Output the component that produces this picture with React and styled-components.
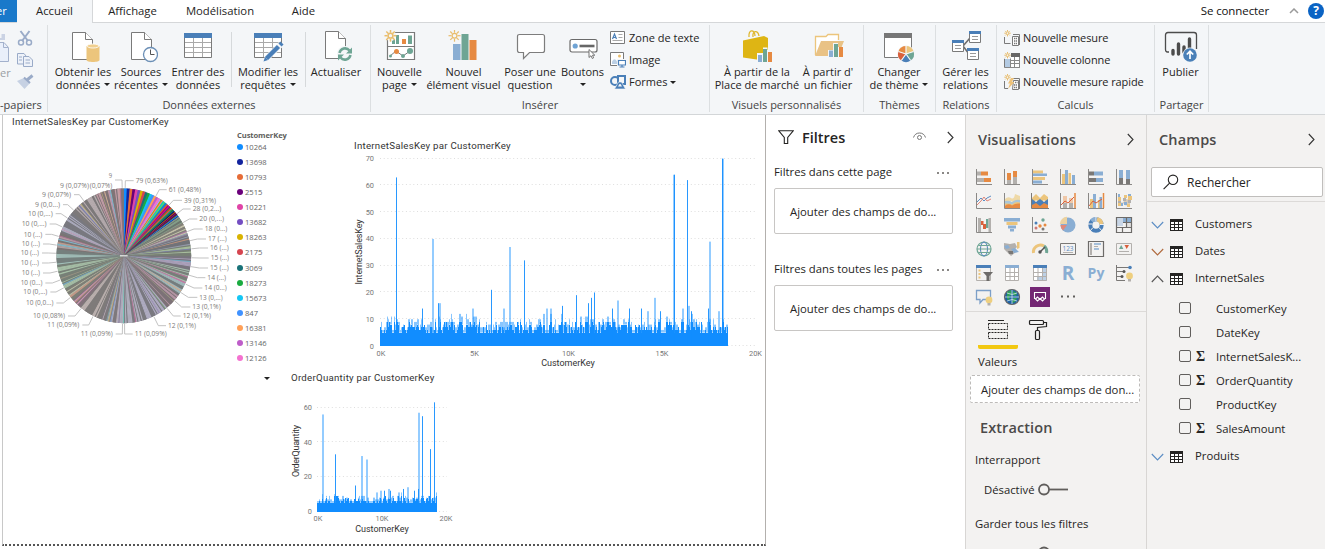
import React from 'react';
import styled, { createGlobalStyle, css } from 'styled-components';

const GlobalStyle = createGlobalStyle`
  *, *::before, *::after { box-sizing: border-box; }
  body { margin: 0; background: #fff; overflow: hidden; }
  #root { font-family: "Open Sans", "Noto Sans", sans-serif; font-size: 11px; color: #252423; }
`;

const Shell = styled.div`
  width: 1325px;
  height: 549px;
  display: flex;
  flex-direction: column;
  overflow: hidden;
  background: #fff;
`;

/* ---------- Tabs ---------- */
const TabStrip = styled.nav`
  height: 23px;
  flex: none;
  display: flex;
  border-bottom: 1px solid #d5d7d9;
  background: #fff;
`;
const FileTab = styled.div`
  width: 17px;
  height: 22px;
  background: #1979ca;
  color: #fff;
  line-height: 22px;
  white-space: nowrap;
  overflow: hidden;
`;
const FileTabText = styled.span`
  display: block;
  margin-left: -4px;
`;
const Tab = styled.div`
  width: ${p => p.$w}px;
  height: 23px;
  line-height: 22px;
  text-align: center;
  font-size: 11.3px;
  ${p => p.$active && css`background: #f4f6f8; border-right: 1px solid #d5d7d9;`}
`;
const Account = styled.div`
  margin-left: auto;
  display: flex;
  align-items: center;
  height: 21px;
  font-size: 11.5px;
  color: #111;
  letter-spacing: -0.1px;
`;
const CaretUp = styled.svg`margin: 0 9px 0 20px;`;
const Help = styled.div`
  width: 16px;
  height: 16px;
  border-radius: 50%;
  background: #0a63c4;
  color: #fff;
  font-weight: 700;
  font-size: 12px;
  line-height: 16px;
  text-align: center;
  margin: 0 1px 0 0;
`;

/* ---------- Ribbon ---------- */
const Ribbon = styled.div`
  height: 92px;
  flex: none;
  display: flex;
  background: #f4f6f8;
  border-bottom: 1px solid #d3d6d8;
  padding-top: 2px;
`;
const GroupBox = styled.section`
  width: ${p => p.$w}px;
  height: 87px;
  flex: none;
  display: flex;
  flex-direction: column;
  border-right: 1px solid #dcdfe1;
`;
const GroupBody = styled.div`
  height: 71px;
  flex: none;
  display: flex;
  padding-left: ${p => p.$pad || 0}px;
`;
const GroupLabel = styled.div`
  flex: none;
  text-align: center;
  line-height: 18px;
  color: #444;
  white-space: nowrap;
`;
const BigButton = styled.div`
  width: ${p => p.$w}px;
  flex: none;
  display: flex;
  flex-direction: column;
  align-items: center;
  padding-top: 5px;
`;
const ButtonText = styled.div`
  margin-top: 1px;
  line-height: 13px;
  white-space: nowrap;
  display: flex;
  flex-direction: column;
  align-items: center;
`;
const Line = styled.span`
  display: flex;
  align-items: center;
  min-height: 13px;
`;
const Caret = styled.i`
  border: 3px solid transparent;
  border-top-color: #222;
  border-bottom-width: 0;
  margin-left: ${p => (p.$alone ? 0 : 4)}px;
`;
const Divider = styled.div`
  width: 1px;
  height: 55px;
  margin: 7px ${p => p.$r}px 0 ${p => p.$l}px;
  background: #d6d9db;
`;
const SmallList = styled.div`
  display: flex;
  flex-direction: column;
  padding: 2px 0 0 ${p => p.$pad || 0}px;
  letter-spacing: ${p => p.$ls || 0}px;
`;
const SmallItem = styled.div`
  height: 22px;
  display: flex;
  align-items: center;
  gap: 3px;
  white-space: nowrap;
  line-height: 14px;
`;
const SmallText = styled.span`margin-top: -1px;`;
const ClipBody = styled.div`
  height: 71px;
  flex: none;
  display: flex;
  color: #9a9ea4;
`;
const PasteColumn = styled.div`
  width: 15px;
  display: flex;
  flex-direction: column;
  padding-top: 8px;
`;
const ToolColumn = styled.div`
  display: flex;
  flex-direction: column;
  padding-top: 3px;
`;
const ClipLabel = styled(GroupLabel)`
  text-align: right;
  padding-right: 6px;
`;

const G = '#7a7a7a', B = '#4a7fb8', LB = '#8aaed3', GR = '#6ea594', O = '#e68a42', Y = '#ecc57c';

const Sun = ({ x, y, r = 6, w = 1.5 }) => (
  <g stroke="#e9bd6c" strokeWidth={w} fill="none">
    {[0, 45, 90, 135, 180, 225, 270, 315].map(a => {
      const c = Math.cos(a * Math.PI / 180), s = Math.sin(a * Math.PI / 180);
      return <path key={a} d={`M${x + c * r * 0.5} ${y + s * r * 0.5}L${x + c * r} ${y + s * r}`} />;
    })}
    <circle cx={x} cy={y} r={r * 0.4} />
  </g>
);
const Doc = ({ x = 6, y = 2 }) => (
  <g transform={`translate(${x} ${y})`} fill="#fff" stroke={G}>
    <path d="M.5 .5H13.5L20.5 7.5V27.5H.5Z" />
    <path d="M13.5 .5V7.5H20.5" />
  </g>
);
const Grid = () => (
  <g>
    <path d="M3.5 3.5H30.5V27.5H3.5Z" fill="#fff" stroke={G} />
    <path d="M4 12.5H30M4 17.5H30M4 22.5H30M12.5 8V27M21.5 8V27" stroke="#a9a9a9" fill="none" />
    <rect x="3" y="3" width="28" height="5" fill={B} />
  </g>
);
const Icon34 = ({ children }) => <svg width="34" height="34" viewBox="0 0 34 34" fill="none">{children}</svg>;

const icons = {
  data: <Icon34><Doc /><path d="M20.5 16V30C20.5 32.6 33.5 32.6 33.5 30V16Z" fill="#ecc57c" /><ellipse cx="27" cy="16" rx="6" ry="2" fill="#f0cf8f" stroke="#fff" strokeWidth=".8" /></Icon34>,
  recent: <Icon34><Doc x={7} /><circle cx="26.5" cy="24.5" r="7" fill="#fff" stroke="#6b8fb6" strokeWidth="1.3" /><path d="M26.5 19.5V24.5H30.5" stroke="#555" /></Icon34>,
  table: <Icon34><Grid /></Icon34>,
  edit: <Icon34><Grid /><path d="M12 32L14 26 28 12 32.5 16 18 30Z" fill="#f4f6f8" /><path d="M12.5 31.5L14 27 17 30Z" fill={B} /><path d="M15.5 28.5L27.5 16.5M29 15L31 13" stroke={B} strokeWidth="4.4" /></Icon34>,
  refresh: <Icon34><Doc y={1} /><circle cx="26" cy="24" r="8" fill="#f4f6f8" /><path d="M20.5 23A5.7 5.7 0 0 1 30.5 20.5M31.5 25A5.7 5.7 0 0 1 21.5 27.5" stroke={GR} strokeWidth="2.5" /><path d="M33 17.5V23.5H27ZM19 30.5V24.5H25Z" fill={GR} /></Icon34>,
  page: <Icon34><path d="M4.5 2.5H31.5V29.5H4.5ZM4.5 16.5H31.5" fill="#fff" stroke={G} strokeWidth="1.2" /><path d="M9 14V9H12V14M13 14V5H16V14M25 14V5.5H29V14" fill={GR} /><path d="M19 9H23V14H19Z" fill={O} /><path d="M7 26L13 21 20 26 27 21" stroke={G} /><circle cx="7.5" cy="26" r="1.5" fill={GR} /><circle cx="13.5" cy="21.5" r="2.5" fill={O} /><circle cx="20" cy="26" r="2" fill={GR} /><circle cx="27" cy="21" r="3" fill={GR} /><circle cx="7.5" cy="5.5" r="5.5" fill="#f4f6f8" /><Sun x={7.5} y={5.7} /></Icon34>,
  visual: <Icon34><path d="M6 14H13.5V30H6Z" fill={LB} /><path d="M14.5 4H21.5V30H14.5Z" fill={GR} /><path d="M22.5 10H29.5V30H22.5Z" fill={O} /><Sun x={7.5} y={5.7} w={1.2} /></Icon34>,
  ask: <Icon34><path d="M6.5 4.5H29.5Q31.5 4.5 31.5 6.5V20.5Q31.5 22.5 29.5 22.5H16.5L10.5 28.5V22.5H6.5Q4.5 22.5 4.5 20.5V6.5Q4.5 4.5 6.5 4.5Z" fill="#fff" stroke="#7d7d7d" strokeWidth="1.2" /></Icon34>,
  buttons: <Icon34><rect x="4" y="9.5" width="27" height="12.5" rx="2" fill="#fff" stroke="#6a6a6a" strokeWidth="1.2" /><circle cx="9.2" cy="16" r="2.6" fill="#6fa3d4" /><path d="M13.5 16H28.5" stroke="#666" strokeWidth="2.6" /><path d="M23 19.5V27.5L25 25.7 26.3 28.5 27.6 27.8 26.5 25.2H28.8Z" fill="#fff" stroke="#666" strokeWidth=".9" /></Icon34>,
  market: <Icon34><path d="M9 7C8-1 15-1 15 6M13 7C12 0 18 0 19 6" stroke="#dfb62c" strokeWidth="1.3" /><path d="M3 10.5L24 6 28 8V25L20 30 3 27.5Z" fill="#deb514" /><path d="M17 23H23V17.5H27.5V20H33V32.5H17Z" fill="#f4f6f8" /><path d="M18 25H22V32H18Z" fill={LB} /><path d="M23 19H27V32H23Z" fill={GR} /><path d="M28 22H32V32H28Z" fill={O} /></Icon34>,
  file: <Icon34><path d="M4.5 25V6.5H15L17 4.5H27.5V10" fill="#fff" stroke="#ecc57c" strokeWidth="1.3" /><path d="M4 26L10 11H33L27 26Z" fill="#e9c285" /><path d="M17 20H22V13H27V17H33V28H17Z" fill="#f4f6f8" /><path d="M18 20.5H22V27H18Z" fill={LB} /><path d="M23 14H27V27H23Z" fill={GR} /><path d="M28 17H32V27H28Z" fill={O} /></Icon34>,
  theme: <Icon34><path d="M2.5 3.5H29.5V27.5H2.5Z" fill="#fff" stroke={G} /><rect x="2" y="3" width="28" height="5" fill="#777" /><circle cx="24" cy="24" r="8.7" fill="#f4f6f8" /><path d="M24 24V16A8 8 0 0 1 31.6 21.5Z" fill="#ecc57c" /><path d="M24 24L31.6 21.5A8 8 0 0 1 28.7 30.5Z" fill={GR} /><path d="M24 24L28.7 30.5A8 8 0 0 1 19.3 30.5Z" fill={B} /><path d="M24 24L19.3 30.5A8 8 0 0 1 16.4 21.5Z" fill="#d9603c" /><path d="M24 24L16.4 21.5A8 8 0 0 1 24 16Z" fill={O} /><path d="M24 24V16M24 24L31.6 21.5M24 24L28.7 30.5M24 24L19.3 30.5M24 24L16.4 21.5" stroke="#f4f6f8" strokeWidth="1.2" /></Icon34>,
  relations: <Icon34><path d="M14 16L21 8M14 16L20 24" stroke="#6d6d6d" strokeWidth="1.6" />{[[3, 10], [20, 1], [18, 18]].map(([x, y]) => <g key={x} transform={`translate(${x} ${y})`}><path d="M.5 .5H11.5V11.5H.5Z" fill="#fff" stroke={G} /><path d="M0 0H12V3H0Z" fill={B} /><path d="M3 5.5H9M3 8.5H9" stroke="#999" /></g>)}</Icon34>,
  publish: <Icon34><path d="M5 22H3.5Q1.5 22 1.5 19.5V5Q1.5 2.5 4 2.5H30Q32.5 2.5 32.5 5V19" stroke="#4c4c4c" strokeWidth="1.3" /><path d="M9 20.5V24M14.5 14V24M20 17V22M25.5 9V20" stroke="#4c4c4c" strokeWidth="3.4" strokeLinecap="round" /><circle cx="26" cy="25" r="7.5" fill="#f4f6f8" /><circle cx="26" cy="25" r="6.8" fill="#4a80b8" /><path d="M26 29V22M22.8 24.5L26 21.3 29.2 24.5" stroke="#fff" strokeWidth="1.7" /></Icon34>,
};

const Icon16 = ({ children }) => <svg width="16" height="16" viewBox="0 0 16 16" fill="none">{children}</svg>;
const smallIcons = {
  text: <Icon16><path d="M.5 1.5H14.5V13.5H.5Z" fill="#fff" stroke={G} /><path d="M2.5 9L4.5 4 6.5 9M3.2 7.5H5.8" stroke={B} strokeWidth="1.2" /><path d="M8.5 4.5H12.5M8.5 7.5H12.5M2.5 10.5H12.5" stroke="#aaa" /></Icon16>,
  image: <Icon16><path d="M.5 .5H13.5V13.5H.5Z" fill="#fff" stroke={G} /><circle cx="9.5" cy="4" r="1.5" fill="#e9bd6c" /><path d="M2 12V9.5Q4.5 5 7 9.5V12Z" fill="#bcd0e5" /><path d="M7 7H16V16H7Z" fill="#f4f6f8" /><path d="M8.5 8.5H15.5V13H8.5ZM9.5 15H14.5M12 13V15" fill="#fff" stroke={B} strokeWidth="1.2" /></Icon16>,
  shapes: <Icon16><circle cx="5" cy="7" r="4" stroke={B} strokeWidth="2" /><path d="M8 2H15V10H8Z" fill="#f4f6f8" stroke={B} strokeWidth="2" /><path d="M4.5 15L8.5 8H11.5L15.5 15Z" fill={B} stroke="#f4f6f8" strokeWidth=".6" /><path d="M8 12.5L9.5 10H10.5L12 12.5Z" fill="#f4f6f8" /></Icon16>,
  measure: <Icon16><path d="M.5 7V13.5H6.5M9 4.5H15.5V15" stroke={G} /><path d="M8.5 6.5H14.5V15.5H8.5Z" fill="#fff" stroke={G} /><path d="M10 8.5H13.5M10 11H13.5M10 13.5H13.5" stroke="#777" strokeWidth="1.4" strokeDasharray="1.2 .6" /><Sun x={3.5} y={3.2} r={3.2} w={1} /></Icon16>,
  column: <Icon16><path d="M.5 6.5V15.5H15.5V1" stroke={G} fill="#fff" /><path d="M1 7H6V15H1Z" fill="#b4cbe3" /><path d="M7 1H16V5H7Z" fill="#666" /><path d="M6 5H15V15H6Z" fill="#fff" /><path d="M6.5 5V15M10.5 5V15M6 8.5H15M6 11.5H15M1 15.5H15.5V5" stroke="#888" /><path d="M0 0H7V6.500H0Z" fill="#f4f6f8" /><Sun x={3.5} y={3.2} r={3.2} w={1} /></Icon16>,
  quick: <Icon16><path d="M.5 7V14.5H4M9 4.5H15.5V15" stroke={G} /><path d="M9.5 6.5H14.5V15.5H8.5Z" fill="#fff" stroke={G} /><path d="M11 8.5H13.5M10 11H13.5M10 13.5H13.5" stroke="#777" strokeWidth="1.4" strokeDasharray="1.2 .6" /><path d="M7 4H10L8 8H10.5L4 15 6 9.5H4Z" fill="#edc27a" /><Sun x={3.5} y={3.2} r={3.2} w={1} /></Icon16>,
};

function Big({ w, icon, lines, caret }) {
  return (
    <BigButton $w={w}>
      {icons[icon]}
      <ButtonText>
        {lines.map((l, i) => <Line key={i}>{l}{caret && i === 1 && <Caret $alone={!l} />}</Line>)}
      </ButtonText>
    </BigButton>
  );
}
function Small({ icon, text, caret }) {
  return <SmallItem>{smallIcons[icon]}<SmallText>{text}</SmallText>{caret && <Caret $alone />}</SmallItem>;
}
function Group({ w, pad, label, children }) {
  return <GroupBox $w={w}><GroupBody $pad={pad}>{children}</GroupBody><GroupLabel>{label}</GroupLabel></GroupBox>;
}

function RibbonBar() {
  return (
    <Ribbon>
      <GroupBox $w={48}>
        <ClipBody>
          <PasteColumn>
            <svg width="10" height="32" viewBox="0 0 10 32"><path d="M0 5H1.5V1H5V7H0Z" fill="#cbd3e4" /><path d="M0 9.5H4L8.5 14.5V28.5H0" fill="#e9effa" stroke="#a3b1cc" /><path d="M3.5 10V14.5H8" fill="none" stroke="#a3b1cc" /></svg>
            <Line>er</Line>
          </PasteColumn>
          <ToolColumn>
            <svg width="20" height="66" viewBox="0 0 20 66" fill="none" stroke="#9aabc8" strokeWidth="1.5">
              <path d="M5.5 3L13 13M14.5 3L7 13" strokeWidth="2" /><circle cx="6" cy="14.5" r="2.5" /><circle cx="14" cy="14.5" r="2.5" />
              <path d="M2.5 25.5H9L11 28V36H2.5Z" fill="#eef2f9" strokeWidth="1" /><path d="M8.5 28.5H14L17.5 32V38.5H8.5Z" fill="#eef2f9" strokeWidth="1" /><path d="M4 29H7M4 32H7M10.5 32H15M10.5 35H15" strokeWidth="1" />
              <path d="M12 52L17.5 47.5" strokeWidth="3" /><path d="M2 53L10 49.5 15 55 9.5 61Z" fill="#c6d1e3" stroke="none" /><path d="M9 49.5L15 55" strokeWidth="2" />
            </svg>
          </ToolColumn>
        </ClipBody>
        <ClipLabel>-papiers</ClipLabel>
      </GroupBox>
      <Group w={323} pad={6} label="Données externes">
        <Big w={58} icon="data" lines={['Obtenir les', 'données']} caret />
        <Big w={58} icon="recent" lines={['Sources', 'récentes']} caret />
        <Big w={56} icon="table" lines={['Entrer des', 'données']} />
        <Divider $l={5} $r={3} />
        <Big w={66} icon="edit" lines={['Modifier les', 'requêtes']} caret />
        <Divider $l={4} $r={0} />
        <Big w={60} icon="refresh" lines={['Actualiser']} />
      </Group>
      <Group w={339} pad={4} label="Insérer">
        <Big w={49} icon="page" lines={['Nouvelle', 'page']} caret />
        <Big w={79} icon="visual" lines={['Nouvel', 'élément visuel']} />
        <Big w={54} icon="ask" lines={['Poser une', 'question']} />
        <Big w={51} icon="buttons" lines={['Boutons', '']} caret />
        <SmallList $pad={2}>
          <Small icon="text" text="Zone de texte" />
          <Small icon="image" text="Image" />
          <Small icon="shapes" text="Formes" caret />
        </SmallList>
      </Group>
      <Group w={154} pad={5} label="Visuels personnalisés">
        <Big w={84} icon="market" lines={['À partir de la', 'Place de marché']} />
        <Big w={58} icon="file" lines={["À partir d'", 'un fichier']} />
      </Group>
      <Group w={72} label="Thèmes"><Big w={70} icon="theme" lines={['Changer', 'de thème']} caret /></Group>
      <Group w={61} label="Relations"><Big w={59} icon="relations" lines={['Gérer les', 'relations']} /></Group>
      <Group w={158} pad={7} label="Calculs">
        <SmallList $ls={-0.1}>
          <Small icon="measure" text="Nouvelle mesure" />
          <Small icon="column" text="Nouvelle colonne" />
          <Small icon="quick" text="Nouvelle mesure rapide" />
        </SmallList>
      </Group>
      <Group w={54} label="Partager"><Big w={51} icon="publish" lines={['Publier']} /></Group>
    </Ribbon>
  );
}

/* ---------- Report canvas ---------- */
const Workspace = styled.div`
  flex: 1;
  display: flex;
  min-height: 0;
`;
const Canvas = styled.main`
  position: relative;
  width: 764px;
  height: 431px;
  margin-left: 2px;
  flex: none;
  background: #fff;
  border-left: 1px solid #c8c8c8;
  border-right: 1px solid #b3b0ad;
  border-bottom: 2px dotted #555;
`;
const Visual = styled.article`
  position: absolute;
  left: ${p => p.$x}px;
  top: ${p => p.$y}px;
  display: flex;
  flex-direction: column;
  font-family: Roboto, "Open Sans", sans-serif;
`;
const VisualTitle = styled.h2`
  margin: 0 0 0 ${p => p.$indent || 0}px;
  font-size: 9.7px;
  font-weight: 400;
  line-height: 14px;
  letter-spacing: 0.25px;
  color: #333;
  white-space: nowrap;
`;
const TitleRow = styled.div`
  display: flex;
  align-items: center;
`;
const PieRow = styled.div`
  display: flex;
`;
const PieHolder = styled.div`
  width: 225px;
  padding-top: 34.7px;
`;
const Legend = styled.ul`
  list-style: none;
  margin: 0;
  padding: 1.5px 0 0;
  font-family: "Open Sans", sans-serif;
  font-size: 7.6px;
  color: #666;
`;
const LegendTitle = styled.li`
  font-weight: 700;
  line-height: 9px;
  color: #605e5c;
  letter-spacing: -0.1px;
`;
const LegendItem = styled.li`
  height: 15.07px;
  display: flex;
  align-items: center;
  gap: 2px;
  &::before {
    content: "";
    width: 6px;
    height: 6px;
    border-radius: 50%;
    background: ${p => p.$c};
  }
`;

const legend = [
  ['10264', '#118DFF'], ['13698', '#12239E'], ['10793', '#E66C37'], ['2515', '#6B007B'], ['10221', '#E044A7'],
  ['13682', '#744EC2'], ['18263', '#D9B300'], ['2175', '#D64550'], ['3069', '#197278'], ['18273', '#1AAB40'],
  ['15673', '#15C6F4'], ['847', '#4092FF'], ['16381', '#FFA058'], ['13146', '#BE5DC9'], ['12126', '#F472D0'],
];
const extra = ['#B5A1FF', '#C4A200', '#FF8080', '#00DBBC', '#5BD667', '#0091D5', '#4668C5', '#FF6300', '#99008A', '#EC008C', '#533285', '#99700A', '#FF4141', '#1F9A85', '#25891C', '#0057A2', '#002050', '#C94F0F', '#450F54', '#B60064', '#34124F', '#6A5A29'];
/* dominant tint of the thin slices, by angle */
const tints = [
  [60, '#2a7a3a'], [70, '#f0e8a0'], [80, '#5a6a9a'], [90, '#8fd070'], [102, '#a080d0'], [112, '#90d0a0'], [125, '#80c8d0'],
  [140, '#c06090'], [160, '#a8a0e0'], [185, '#b0a8d8'], [200, '#c8a0c0'], [220, '#d0b0a8'], [228, '#f060b0'], [240, '#c8d090'],
  [262, '#90d890'], [275, '#80d8c8'], [290, '#b08080'], [310, '#a0a0d8'], [335, '#c0a0a8'], [361, '#e07090'],
];

const rng = seed => () => {
  seed = (seed * 1664525 + 1013904223) % 4294967296;
  return seed / 4294967296;
};
const mix = (hex, base, t) => {
  const n = parseInt(hex.slice(1), 16);
  const ch = [n >> 16, (n >> 8) & 255, n & 255].map(v => Math.round(v * (1 - t) + base * t));
  return `rgb(${ch.join(',')})`;
};

const CX = 371.5, CY = 430.5, R = 202;
function buildSlices() {
  const rand = rng(77);
  const colors = legend.map(l => l[1]).concat(extra);
  const out = [];
  let a = 0, i = 0;
  while (a < 360) {
    const w = i < 15 ? 2.5 - i * 0.05 : i < 45 ? 1.15 - (i - 15) * 0.02 : 0.7 + rand() * 0.5;
    const end = Math.min(360, a + w);
    const stop = Math.min(360, end + 0.35);
    const p = deg => `${(CX + R * Math.sin(deg * Math.PI / 180)).toFixed(2)} ${(CY - R * Math.cos(deg * Math.PI / 180)).toFixed(2)}`;
    let fill = colors[i % colors.length];
    if (a > 54) {
      const band = 0.5 + 0.5 * Math.sin(a * 0.62 + Math.sin(a * 0.11) * 2);
      const tint = tints.find(t => a < t[0])[1];
      const light = rand() < 0.2 + 0.65 * band;
      fill = light ? mix(rand() < 0.75 ? tint : colors[Math.floor(rand() * colors.length)], 178, 0.66) : mix(tint, 116, 0.88);
    }
    out.push({ d: `M${CX} ${CY}L${p(a)}A${R} ${R} 0 0 1 ${p(stop)}Z`, fill });
    a = end;
    i += 1;
  }
  return out;
}
const slices = buildSlices();

/* text, start, end, vertical centre, side of the leader line, elbow */
const pieLabels = [
  ['9', 326, 336, 190, 'r', 366], ['9 (0,07%)', 180, 267, 220], ['(0,07%)', 269, 337, 220], ['9 (0,07%)', 126, 213, 247, 'r', 238],
  ['9 (0,0...)', 105, 180, 277, 'r', 203], ['10 (0,...)', 84, 158, 304, 'r', 183], ['10 (0,...)', 65, 140, 335, 'r', 168],
  ['10 (...)', 71, 127, 366, 'r', 155], ['10 (...)', 65, 120, 395, 'r', 148], ['10 (...)', 62, 117, 422, 'r', 145],
  ['10 (...)', 62, 117, 452, 'r', 145], ['10 (...)', 65, 120, 482, 'r', 150], ['10 (0...)', 62, 127, 512, 'r', 157],
  ['10 (0,...)', 70, 142, 539, 'r', 168], ['10 (0,0...)', 78, 160, 572, 'r', 190], ['10 (0,08%)', 99, 195, 611, 'r', 225],
  ['11 (0,09%)', 142, 238, 638, 'r', 266], ['11 (0,09%)', 242, 338, 665, 'r', 367], ['11 (0,09%)', 404, 500, 665, 'l', 374],
  ['12 (0,1%)', 504, 588, 640, 'l', 475], ['12 (0,1%)', 548, 633, 611, 'l', 520], ['13 (0,1%)', 577, 662, 584, 'l', 545],
  ['13 (0,...)', 598, 668, 555, 'l', 565], ['14 (0...)', 613, 680, 527, 'l', 582], ['14 (...)', 622, 678, 496, 'l', 592],
  ['15 (...)', 630, 686, 467, 'l', 598], ['15 (...)', 632, 687, 437, 'l', 600], ['16 (...)', 630, 686, 407, 'l', 598],
  ['17 (...)', 624, 680, 380, 'l', 592], ['18 (0...)', 614, 682, 350, 'l', 582], ['20 (0,...)', 598, 672, 320, 'l', 568],
  ['28 (0,2...)', 578, 664, 290, 'l', 549], ['39 (0,31%)', 552, 648, 264, 'l', 520], ['61 (0,48%)', 506, 603, 232, 'l', 478],
  ['79 (0,63%)', 407, 503, 205, 'l', 376],
];

function PieChart() {
  return (
    <svg width="218" height="195" viewBox="36 155 654 585" fontFamily="Open Sans, sans-serif">
      <circle cx={CX} cy={CY} r={R} fill="#7c7c7c" />
      {slices.map((s, i) => <path key={i} d={s.d} fill={s.fill} />)}
      <path d="M360 430.5H383" stroke="#fff" strokeWidth="3" />
      {pieLabels.map(([t, x0, x1, y, side, ex], i) => {
        let lead = null;
        if (side) {
          const sx = side === 'r' ? x1 + 9 : x0 - 6;
          const ey = t === '9' ? 203 : y;
          const dx = ex - CX, dy = ey - CY, len = Math.hypot(dx, dy);
          const px = CX + dx / len * (R + 2), py = CY + dy / len * (R + 2);
          lead = <polyline points={`${sx},${ey} ${ex},${ey} ${px},${py}`} fill="none" stroke="#b8b8b8" strokeWidth="2.6" />;
        }
        return <g key={i}>{lead}<text x={x0} y={y + 7.5} fontSize="20.5" fill="#7d7b79" textLength={x1 - x0} lengthAdjust="spacingAndGlyphs">{t}</text></g>;
      })}
    </svg>
  );
}

function makeColumns(n, seed, body, spread) {
  const rand = rng(seed);
  const out = [];
  while (out.length < n) {
    const top = body + Math.floor(rand() * spread) + (rand() < 0.16 ? 2 : 0);
    const run = rand() < 0.5 ? 1 : 2;
    for (let k = 0; k < run; k += 1) {
      const solid = Math.max(body - 1, top - Math.floor(rand() * 4.2));
      out.push([Math.min(solid, body + 3), top]);
    }
  }
  return out.slice(0, n);
}

function Histogram({ w, h, x0, x1, base, unit, data, spikes, yTicks, xTicks, yLabel, yLabelAt, xLabelAt, yTickX }) {
  return (
    <svg width={w} height={h} viewBox={`0 0 ${w} ${h}`} fontFamily="Roboto, sans-serif">
      {yTicks.map(v => <path key={v} d={`M${x0} ${Math.round(base - v * unit) - 0.5}H${x1}`} stroke="#dedede" strokeDasharray="1 2.7" />)}
      {yTicks.map(v => <text key={v} x={yTickX} y={base - v * unit + 2.5} textAnchor="end" fontSize="7.4" fill="#777">{v}</text>)}
      {xTicks.map(([t, x]) => <text key={t} x={x} y={base + 9.5} textAnchor="middle" fontSize="7.4" fill="#777">{t}</text>)}
      {data.map(([s, l], i) => (
        <g key={i}>
          <rect x={x0 + i} y={base - l * unit} width="1" height={(l - s) * unit} fill="#118DFF" opacity=".5" />
          <rect x={x0 + i} y={base - s * unit} width="1" height={s * unit} fill="#118DFF" shapeRendering="crispEdges" />
        </g>
      ))}
      {spikes.map(([x, v, light], i) => (
        <rect key={i} x={x} y={base - v * unit} width={light ? 2 : 1} height={v * unit} fill="#118DFF" opacity={light ? 0.45 : 0.9} />
      ))}
      <text x={xLabelAt} y={base + 20} textAnchor="middle" fontSize="9" fill="#333">CustomerKey</text>
      <text transform={`translate(${yLabelAt[0]} ${yLabelAt[1]}) rotate(-90)`} textAnchor="middle" fontSize="9" fill="#333" textLength={yLabelAt[2]}>{yLabel}</text>
    </svg>
  );
}

const salesData = makeColumns(348, 11, 6, 4.6);
const salesSpikes = [
  [45, 63], [81, 40, 1], [87, 16], [88, 16, 1], [71, 14], [121, 14, 1], [140, 21], [152, 14, 1], [158, 37, 1], [173, 32],
  [195, 14, 1], [199, 14, 1], [211, 15], [225, 19], [237, 16], [240, 18], [243, 20], [261, 14], [266, 17, 1], [278, 14], [290, 14],
  [296, 13, 1], [303, 18, 1], [309, 13], [322, 64, 1], [323, 64], [331, 14, 1], [336, 62], [337, 15, 1], [340, 13], [357, 14],
  [358, 39, 1], [367, 13, 1], [371, 70, 1], [371, 70],
];
const orderData = makeColumns(120, 29, 6, 3.6);
const orderSpikes = [
  [58, 56, 1], [71, 33], [91, 15], [97, 32, 1], [102, 30, 1], [112, 11, 1], [116, 12, 1], [120, 12], [124, 13, 1], [126, 12],
  [134, 11, 1], [139, 13], [143, 14, 1], [150, 12], [154, 57, 1], [154, 13], [158, 55], [166, 36], [170, 63],
];

function Report() {
  return (
    <Canvas>
      <Visual $x={9} $y={0}>
        <VisualTitle>InternetSalesKey par CustomerKey</VisualTitle>
        <PieRow>
          <PieHolder><PieChart /></PieHolder>
          <Legend>
            <LegendTitle>CustomerKey</LegendTitle>
            {legend.map(([t, c]) => <LegendItem key={t} $c={c}>{t}</LegendItem>)}
          </Legend>
        </PieRow>
      </Visual>
      <Visual $x={348} $y={24}>
        <VisualTitle $indent={3}>InternetSalesKey par CustomerKey</VisualTitle>
        <Histogram w={414} h={218} x0={29} x1={406} base={193} unit={2.676} data={salesData} spikes={salesSpikes}
          yTicks={[0, 10, 20, 30, 40, 50, 60, 70]} xTicks={[['0K', 30], ['5K', 123.5], ['10K', 217.5], ['15K', 311], ['20K', 404.5]]}
          yTickX={23} yLabel="InternetSalesKey" yLabelAt={[11, 99, 65]} xLabelAt={217} />
      </Visual>
      <Visual $x={261} $y={256}>
        <TitleRow><Caret $alone /><VisualTitle $indent={21}>OrderQuantity par CustomerKey</VisualTitle></TitleRow>
        <Histogram w={200} h={155} x0={53} x1={183} base={126.5} unit={1.733} data={orderData} spikes={orderSpikes}
          yTicks={[0, 20, 40, 60]} xTicks={[['0K', 54], ['10K', 118], ['20K', 182]]}
          yTickX={48} yLabel="OrderQuantity" yLabelAt={[35, 66, 52]} xLabelAt={118} />
      </Visual>
    </Canvas>
  );
}

/* ---------- Filters pane ---------- */
const FiltersPane = styled.aside`
  width: 199px;
  flex: none;
  padding: 0 12px 0 8px;
  font-size: 11.3px;
  background: #fff;
`;
const PaneHead = styled.header`
  height: ${p => p.$h}px;
  display: flex;
  align-items: center;
  padding: ${p => p.$pad};
`;
const PaneTitle = styled.h3`
  margin: 0;
  font-size: 14.5px;
  font-weight: 600;
  letter-spacing: ${p => p.$ls || 0}px;
  color: ${p => p.$c || '#252423'};
  flex: 1;
  line-height: 20px;
`;
const FilterHead = styled.div`
  height: 24px;
  display: flex;
  justify-content: space-between;
  align-items: center;
  white-space: nowrap;
`;
const Dots = styled.span`
  display: flex;
  gap: 3px;
  margin: 4px 4px 0 0;
  i { width: 2px; height: 1.5px; background: #8a8886; }
`;
const DropCard = styled.div`
  height: 46px;
  border: 1px solid #c8c6c4;
  border-radius: 2px;
  margin: 5px 0 ${p => p.$mb || 0}px;
  padding-left: 15px;
  line-height: 46px;
  white-space: nowrap;
`;
const Chevron = ({ dir = 'right', c = '#333' }) => {
  if (dir === 'right') return <svg width="7" height="13" viewBox="0 0 7 13" fill="none" stroke={c} strokeWidth="1.1"><path d="M.8 1L6 6.5 .8 12" /></svg>;
  return <svg width="13" height="8" viewBox="0 0 13 8" fill="none" stroke={c} strokeWidth="1.1"><path d={dir === 'down' ? 'M.8 1L6.5 7 12.2 1' : 'M.8 7L6.5 1 12.2 7'} /></svg>;
};
const Eye = styled.svg`margin: 0 21px 3px 0;`;
const Funnel = styled.svg`margin-right: 8px;`;
const FilterChevron = styled.span`
  display: flex;
  margin-right: -1px;
`;

function Filters() {
  return (
    <FiltersPane>
      <PaneHead $h={44} $pad="1px 0 0 4px">
        <Funnel width="16" height="15" viewBox="0 0 16 15" fill="none" stroke="#252423" strokeWidth="1.1"><path d="M.8 .8H15.2L9.7 7.5V13.5H6.3V7.5Z" /></Funnel>
        <PaneTitle>Filtres</PaneTitle>
        <Eye width="13" height="9" viewBox="0 0 13 9" fill="none" stroke="#777"><path d="M.5 5.5Q2 1 6.5 1T12.5 5.5" /><circle cx="6.5" cy="5.5" r="2" /></Eye>
        <FilterChevron><Chevron /></FilterChevron>
      </PaneHead>
      <FilterHead>Filtres dans cette page<Dots><i /><i /><i /></Dots></FilterHead>
      <DropCard $mb={22}>Ajouter des champs de do...</DropCard>
      <FilterHead>Filtres dans toutes les pages<Dots><i /><i /><i /></Dots></FilterHead>
      <DropCard>Ajouter des champs de do...</DropCard>
    </FiltersPane>
  );
}

/* ---------- Visualisations pane ---------- */
const VizPane = styled.aside`
  width: 181px;
  flex: none;
  background: #f3f2f1;
  border-left: 1px solid #d8d6d4;
  font-size: 11.3px;
  overflow: hidden;
`;
const IconGrid = styled.div`
  display: grid;
  grid-template-columns: repeat(6, 28px);
  grid-auto-rows: 24px;
  place-items: center;
  padding: 0 0 0 4px;
  height: 146px;
`;
const PurpleTile = styled.div`
  width: 20px;
  height: 20px;
  background: #742774;
  display: flex;
  align-items: center;
  justify-content: center;
`;
const Letter = styled.span`
  font-weight: 700;
  font-size: ${p => p.$s}px;
  line-height: 18px;
  color: #8aaed3;
`;
const FieldTabs = styled.div`
  display: flex;
  height: 38px;
  border-top: 1px solid #dcdad8;
  padding: 7px 0 0 12px;
`;
const FieldTab = styled.div`
  width: 40px;
  height: 30px;
  display: flex;
  justify-content: center;
  border-bottom: 4px solid ${p => (p.$on ? '#f2c811' : 'transparent')};
  border-radius: 0 0 2px 2px;
`;
const FieldLabel = styled.div`
  height: ${p => p.$h}px;
  line-height: ${p => p.$h}px;
  padding-left: ${p => p.$pad}px;
  white-space: nowrap;
`;
const DashedWell = styled.div`
  width: 170px;
  height: 28px;
  margin-left: 4px;
  border: 1px dashed #bdbbb9;
  border-radius: 2px;
  background: #fff;
  padding-left: 10px;
  line-height: 27px;
  white-space: nowrap;
`;
const ToggleRow = styled.div`
  display: flex;
  align-items: center;
  height: ${p => p.$h}px;
  padding-left: 18px;
  gap: 3px;
`;
const Switch = () => <svg width="32" height="13" viewBox="0 0 32 13" fill="none" stroke="#605e5c"><circle cx="7" cy="6.5" r="5" strokeWidth="1.8" /><path d="M12 6.5H31" strokeWidth="1.8" /></svg>;

const V = ({ children }) => <svg width="18" height="18" viewBox="0 0 18 18" fill="none">{children}</svg>;
const Axis = () => <path d="M1.5 1V16.5H17" stroke="#8a8886" />;
const F = ({ d, c }) => <path d={d} fill={c} />;
const S = ({ d, c, w = 1 }) => <path d={d} stroke={c} strokeWidth={w} />;
const LG = '#b3b0ad', DG = '#7a7876';

const vizIcons = [
  <V><F d="M2 3.5H6V7.5H2ZM2 10H9V14H2Z" c={LG} /><F d="M6 3.5H13V7.5H6ZM9 10H16V14H9Z" c={O} /><Axis /></V>,
  <V><F d="M4 12H8V16H4ZM10 9H14V16H10Z" c={LG} /><F d="M4 5H8V12H4ZM10 3H14V9H10Z" c={O} /><Axis /></V>,
  <V><F d="M2 2.5H12V5.5H2ZM2 9H14V12H2Z" c={Y} /><F d="M2 5.5H16V8H2ZM2 12.5H11V15.5H2Z" c={LB} /><Axis /></V>,
  <V><F d="M3 6H6V16H3ZM9.5 5H12V16H9.5Z" c={Y} /><F d="M6 2H9V16H6ZM13 7H16V16H13Z" c={LB} /><Axis /></V>,
  <V><F d="M2 3.5H7V7.5H2ZM2 10H9V14H2Z" c={DG} /><F d="M7 3.5H16V7.5H7ZM9 10H16V14H9Z" c={LB} /><Axis /></V>,
  <V><F d="M4 10H8V16H4ZM11 11H15V16H11Z" c={DG} /><F d="M4 2H8V10H4ZM11 2H15V11H11Z" c={LB} /><Axis /></V>,
  <V><S d="M2 10L6 6 9 9 12 6 16 4" c="#5b8dc4" /><S d="M2 13L6 9 9 5 12 9 16 7" c="#e0877a" /><Axis /></V>,
  <V><F d="M2 7Q5 4 8 6T12 2L17 4V9Q13 12 8 9Q5 9 2 12Z" c="#efd9a7" /><F d="M2 9Q6 8 9 10Q13 7 17 8V13H2Z" c="#a9c6d8" /><F d="M2 11.5Q6 11 9 12.500Q13 9 17 10.500V12L9 14L2 13Z" c={Y} /><F d="M2 13.500Q6 11 9 13.500Q13 11 17 11.500V16H2Z" c={O} /><Axis /></V>,
  <V><F d="M1 6L5 2 9 6 13 2 17 5V12L13 8 9 11 5 8 1 12Z" c={Y} /><F d="M1 7L5 10 9 7 13 10 17 7V14H1Z" c={B} /><F d="M1 13L5 11 9 14 13 11 17 13V16H1Z" c={O} /><S d="M.5 1V16.5H18" c={DG} /></V>,
  <V><F d="M4 4H8V16H4Z" c="#f0c8a8" /><F d="M4 11H8V16H4ZM10 11H14V16H10Z" c={LG} /><F d="M10 6H14V11H10Z" c="#f0c8a8" /><S d="M2 13L6 9 9 11 15 5" c="#d9603c" /><S d="M16 1V16" c={O} w={1.5} /><Axis /></V>,
  <V><F d="M3 7H6V16H3ZM11 8H13V16H11Z" c={Y} /><F d="M6 2H9V16H6ZM12.5 5H15V16H12.5Z" c={LB} /><S d="M2 14L6 9 9 11 15 7" c="#d9603c" /><S d="M16.5 1V16" c={O} w={1.5} /><Axis /></V>,
  <V><F d="M3 9Q7 13 9 9T15 9V12Q11 15 9 12T3 12Z" c="#d9cbb8" /><F d="M3 5H6V9H3ZM9 3H12V6H9ZM13 4H17V8H13Z" c={Y} /><F d="M3 9H6V11H3ZM8 6H11V9H8ZM13 8H16V11H13Z" c={LG} /><F d="M3 2H5V5H3ZM13 2H16V4H13ZM6 11H8V14H6ZM9 10H12V13H9Z" c={LB} /><F d="M3 11H6V14H3ZM12 12H15V15H12Z" c={Y} /><Axis /></V>,
  <V><F d="M3 2H6V16H3Z" c={LG} /><F d="M6 5H8.5V9H6ZM8 8H11V13H8Z" c="#d9603c" /><F d="M11 3H13.5V12H11Z" c={GR} /><F d="M13.5 2H16V16H13.5Z" c={LG} /><Axis /></V>,
  <V><F d="M1 2H17V5.5H1Z" c={LB} /><F d="M3.5 6H14.5V9H3.5Z" c={Y} /><F d="M5 9.5H13V12.5H5Z" c={LB} /><F d="M7 13H11V15.5H7Z" c={LB} /></V>,
  <V><circle cx="5" cy="7" r="1.5" fill={B} /><circle cx="9" cy="10" r="1.7" fill={O} /><circle cx="12" cy="4" r="1.7" fill={GR} /><circle cx="14" cy="9" r="1.5" fill={O} /><circle cx="12" cy="13" r="1.5" fill={DG} /><circle cx="5" cy="12" r="1.5" fill="#c77" /><Axis /></V>,
  <V><circle cx="9" cy="9" r="7.5" fill={LB} /><F d="M8 8V0.8A7.5 7.5 0 0 0 .8 8Z" c="#ecd2a0" /><F d="M8 9H1.5A7.5 7.5 0 0 0 4 14.5Z" c="#e0897a" /></V>,
  <V><circle cx="9" cy="9" r="5.7" stroke={B} strokeWidth="4" /><path d="M4.5 5A5.7 5.7 0 0 1 9 3.2" stroke={LB} strokeWidth="4" /><path d="M14.5 8A5.7 5.7 0 0 0 10 3.3" stroke={Y} strokeWidth="4" /><S d="M9 0V5M0 8H5M13 8.5H18M3 15L6 11.5M12 11.5L15 15" c="#f3f2f1" /></V>,
  <V><F d="M2 2H8V10H2Z" c="#c9d6e6" /><F d="M8 2H16V6H8Z" c={LB} /><F d="M11 6H16V11H11Z" c="#e2e1e0" /><S d="M1.5 1.5H16.5V16.5H1.5ZM1 11.5H16M7.5 11V16M11.5 2V11M8 6.5H16" c="#6d6b69" w={1.2} /></V>,
  <V><circle cx="9" cy="9" r="7" stroke={GR} strokeWidth="1.2" /><ellipse cx="9" cy="9" rx="3.5" ry="7" stroke={B} /><S d="M2 9H16M3.5 5.5H14.5M3.5 12.5H14.5" c={GR} /></V>,
  <V><F d="M1 3L7 4 12 3 14 7 12 9 13 12 8 16 4 12 1 9Z" c={LG} /><F d="M1 6L5 5 7 8 3 9ZM8 9L12 8 16 12 11 13Z" c={LB} /><F d="M14 2H16.5V8L14 9Z" c={Y} /><F d="M5 11H10V14H6Z" c={DG} /></V>,
  <V><path d="M2.5 13A7 7 0 0 1 13 6" stroke={Y} strokeWidth="3" /><path d="M13 6A7 7 0 0 1 15.5 13" stroke={GR} strokeWidth="3" /><S d="M9 12L14 7" c="#555" w={1.5} /><circle cx="9" cy="12" r="1.7" fill="#555" /></V>,
  <V><S d="M1.5 3.5H16.5V14.5H1.5Z" c={DG} /><text x="9" y="10.5" fontSize="6.5" textAnchor="middle" fill="#5b8dc4">123</text><S d="M4 12.5H14" c={LG} /></V>,
  <V><S d="M1.5 1.5H16.5V16.5H1.5Z" c="#6d6b69" w={1.2} /><F d="M3 3H5V15H3Z" c={LG} /><S d="M7 4H14M7 9H12" c={LB} w={1.5} /><S d="M7 6.5H11" c={LG} /></V>,
  <V><S d="M1.5 3.5H16.5V14.5H1.5Z" c={LG} /><F d="M4 9L6.2 5 8.4 9Z" c={GR} /><F d="M9.5 5H14L11.7 9Z" c="#d9603c" /><S d="M4 11.5H14" c={LG} /></V>,
  <V><S d="M1.5 2.5H15.5V16.5H1.5Z" c={LG} /><F d="M1 1H16V4H1Z" c={B} /><F d="M3.5 5.5H5.5V7.5H3.5ZM3.5 9H5.5V11H3.5ZM3.5 12.5H5.5V14.5H3.5Z" c={Y} /><F d="M8 8H18L14.5 12V17H11.5V12Z" c="#6d6b69" /></V>,
  <V><F d="M2 2H16V16H2Z" c="#fff" /><S d="M2.5 2.5H15.5V16.5H2.5ZM2 8.5H15M2 12.5H15M7 3V16M11.5 3V16" c={LG} /><F d="M2 1H16V4H2Z" c={LB} /></V>,
  <V><F d="M2 2H16V16H2Z" c="#fff" /><F d="M6 12H16V17H6ZM12 4H16V16H12Z" c="#bcd0e5" /><S d="M2.5 2.5H15.5V16.5H2.5ZM2 8.5H15M2 12.5H15M7 3V16M11.5 3V16" c={LG} /><F d="M2 1H16V4H2Z" c={B} /></V>,
  <Letter $s={19}>R</Letter>,
  <Letter $s={14}>Py</Letter>,
  <V><S d="M1.5 1V16.5H10M2 3.5H14M2 7.5H9M2 12.5H7" c={DG} /><circle cx="15" cy="3.5" r="1.8" fill={B} /><circle cx="9" cy="7.5" r="1.5" fill="#555" /><circle cx="7" cy="12.5" r="1.5" fill="#555" /><circle cx="14.5" cy="12" r="3.4" fill="#eecf7f" /><F d="M13 15H16V17.5H13Z" c={LG} /></V>,
  <V><S d="M1.5 2.5H15.5V11.5H8L5 15V11.5H1.5Z" c="#7c9fc8" w={1.3} /><circle cx="14" cy="12" r="3.4" fill="#eecf7f" /><F d="M12.5 15H15.5V17.5H12.5Z" c={LG} /></V>,
  <V><circle cx="9" cy="9" r="7.5" fill="#1d62a8" stroke="#666" strokeWidth="1.2" /><F d="M4 4L8 2 9 6 6 9 7 13 4 11ZM10 3L14 5 13 8 10 7ZM10 10L14 10 12 14 9 15Z" c="#2f9f5a" /><S d="M2 9H16M9 2V16M4 5Q9 8 14 5M4 13Q9 10 14 13" c="#cfe3ea" w={0.8} /></V>,
  <PurpleTile><svg width="14" height="12" viewBox="0 0 14 12" fill="none" stroke="#fff" strokeWidth="1.1"><path d="M2.5 7.5H1.5V1.5H12.5V7.5H11.5" /><path d="M2.500 8L4.500 6 7 8.500 9.500 6 11.500 8 9.500 10 7 7.500 4.500 10Z" /></svg></PurpleTile>,
  <V><F d="M2 7.5H4V9.5H2ZM8 7.5H10V9.5H8ZM14 7.5H16V9.5H14Z" c="#605e5c" /></V>,
];

function Visualisations() {
  return (
    <VizPane>
      <PaneHead $h={50} $pad="0 12px 1px 12px">
        <PaneTitle $c="#4b4a49" $ls={0.12}>Visualisations</PaneTitle>
        <Chevron />
      </PaneHead>
      <IconGrid>{vizIcons.map((ic, i) => <React.Fragment key={i}>{ic}</React.Fragment>)}</IconGrid>
      <FieldTabs>
        <FieldTab $on>
          <svg width="22" height="22" viewBox="0 0 22 22" fill="none" stroke="#252423"><path d="M1 1.5H17" /><path d="M1.5 4.5H20.5V10.5H1.5ZM1.5 13.5H20.5V19.5H1.5Z" strokeDasharray="2 1" /></svg>
        </FieldTab>
        <FieldTab>
          <svg width="20" height="22" viewBox="0 0 20 22" fill="none" stroke="#252423" strokeWidth="1.2"><rect x="1.5" y="1.5" width="14" height="4" rx="1" /><path d="M15.5 3.5H18.5V7.5L9.5 8.5V11.5" /><rect x="7.5" y="11.5" width="4" height="9" rx="1" /></svg>
        </FieldTab>
      </FieldTabs>
      <FieldLabel $h={26} $pad={12}>Valeurs</FieldLabel>
      <DashedWell>Ajouter des champs de don...</DashedWell>
      <PaneHead $h={48} $pad="2px 0 0 14px"><PaneTitle $c="#4b4a49" $ls={0.1}>Extraction</PaneTitle></PaneHead>
      <FieldLabel $h={18} $pad={9}>Interrapport</FieldLabel>
      <ToggleRow $h={40}>Désactivé<Switch /></ToggleRow>
      <FieldLabel $h={30} $pad={9}>Garder tous les filtres</FieldLabel>
      <ToggleRow $h={26}>Désactivé<Switch /></ToggleRow>
    </VizPane>
  );
}

/* ---------- Fields pane ---------- */
const FieldsPane = styled.aside`
  flex: 1;
  background: #f3f2f1;
  border-left: 1px solid #d8d6d4;
  font-size: 11.3px;
`;
const Search = styled.div`
  width: 172px;
  height: 30px;
  margin: 2px 0 4px 4px;
  border: 1px solid #c0bebc;
  border-radius: 2px;
  background: #fff;
  display: flex;
  align-items: center;
  gap: 8px;
  padding-left: 11px;
  font-size: 12px;
`;
const Tree = styled.div`
  border-top: 1px solid #dcdad8;
  padding-top: 9px;
`;
const TableRow = styled.div`
  height: 27px;
  display: flex;
  align-items: center;
  padding-left: 4px;
`;
const TableName = styled.span`
  margin-left: 12px;
  padding-bottom: 3px;
`;
const TableGlyph = styled.svg`margin: 1px 0 0 6px;`;
const FieldList = styled.div`padding: 5px 0 2px 32px;`;
const FieldRow = styled.div`
  height: 24px;
  display: flex;
  align-items: center;
  white-space: nowrap;
  padding-bottom: 2px;
`;
const Check = styled.span`
  width: 12px;
  height: 12px;
  border: 1px solid #605e5c;
  border-radius: 2px;
  margin-bottom: 1px;
`;
const Sigma = styled.span`
  width: 25px;
  padding-left: 5px;
  font-family: "Liberation Serif", serif;
  font-weight: 700;
  font-size: 14px;
  line-height: 16px;
  padding-top: 1px;
`;

const TableEntry = ({ name, dir = 'down', c = '#5b8dc4' }) => (
  <TableRow>
    <Chevron dir={dir} c={c} />
    <TableGlyph width="13" height="12" viewBox="0 0 13 12"><rect width="13" height="12" fill="#252423" /><path d="M1 3H4V5H1ZM5 3H8V5H5ZM9 3H12V5H9ZM1 6H4V8H1ZM5 6H8V8H5ZM9 6H12V8H9ZM1 9H4V11H1ZM5 9H8V11H5ZM9 9H12V11H9Z" fill="#fff" /></TableGlyph>
    <TableName>{name}</TableName>
  </TableRow>
);

const fields = [['CustomerKey'], ['DateKey'], ['InternetSalesK...', 1], ['OrderQuantity', 1], ['ProductKey'], ['SalesAmount', 1]];

function Fields() {
  return (
    <FieldsPane>
      <PaneHead $h={50} $pad="0 10px 1px 12px">
        <PaneTitle $c="#4b4a49" $ls={0.12}>Champs</PaneTitle>
        <Chevron />
      </PaneHead>
      <Search>
        <svg width="16" height="16" viewBox="0 0 16 16" fill="none" stroke="#252423" strokeWidth="1.1"><circle cx="10" cy="5.8" r="4.7" /><path d="M6.6 9.2L.6 15.2" /></svg>
        Rechercher
      </Search>
      <Tree>
        <TableEntry name="Customers" />
        <TableEntry name="Dates" c="#b0693c" />
        <TableEntry name="InternetSales" dir="up" c="#555" />
        <FieldList>
          {fields.map(([n, s]) => <FieldRow key={n}><Check /><Sigma>{s ? 'Σ' : ''}</Sigma>{n}</FieldRow>)}
        </FieldList>
        <TableEntry name="Produits" />
      </Tree>
    </FieldsPane>
  );
}

export default function App() {
  return (
    <>
      <GlobalStyle />
      <Shell>
        <TabStrip>
          <FileTab><FileTabText>er</FileTabText></FileTab>
          <Tab $w={76} $active>Accueil</Tab>
          <Tab $w={79}>Affichage</Tab>
          <Tab $w={96}>Modélisation</Tab>
          <Tab $w={71}>Aide</Tab>
          <Account>
            Se connecter
            <CaretUp width="10" height="6" viewBox="0 0 10 6" fill="none" stroke="#9a9a9a" strokeWidth="1.5"><path d="M1 5L5 1 9 5" /></CaretUp>
            <Help>?</Help>
          </Account>
        </TabStrip>
        <RibbonBar />
        <Workspace>
          <Report />
          <Filters />
          <Visualisations />
          <Fields />
        </Workspace>
      </Shell>
    </>
  );
}
